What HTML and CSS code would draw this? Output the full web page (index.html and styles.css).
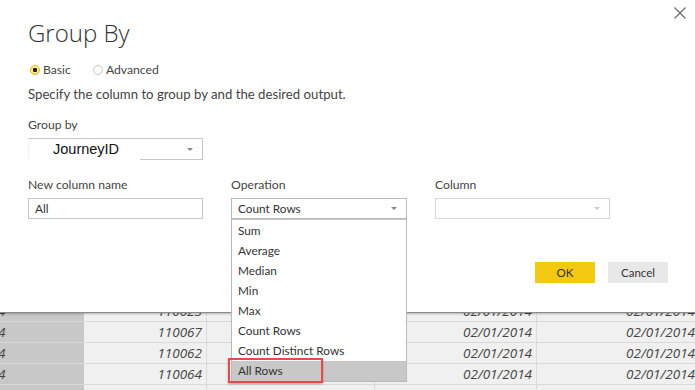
FILE: index.html
```html
<!DOCTYPE html>
<html lang="en">
<head>
  <meta charset="UTF-8" />
  <title>Group By</title>
  <link rel="stylesheet" href="styles.css">
</head>
<body>
  <div class="grid">
    <div class="row"><div class="c1">4</div><div class="c2">110023</div><div class="c3"></div><div class="c4">02/01/2014</div><div class="c5">02/01/2014</div></div>
    <div class="row"><div class="c1">4</div><div class="c2">110067</div><div class="c3"></div><div class="c4">02/01/2014</div><div class="c5">02/01/2014</div></div>
    <div class="row"><div class="c1">4</div><div class="c2">110062</div><div class="c3"></div><div class="c4">02/01/2014</div><div class="c5">02/01/2014</div></div>
    <div class="row"><div class="c1">4</div><div class="c2">110064</div><div class="c3"></div><div class="c4">02/01/2014</div><div class="c5">02/01/2014</div></div>
    <div class="row"><div class="c1"></div><div class="c2"></div><div class="c3"></div><div class="c4"></div><div class="c5"></div></div>
  </div>

  <div class="dialog">
    <button class="close-btn" aria-label="Close">
      <svg width="12" height="12" viewBox="0 0 12 12"><path d="M0.5 0.5 L11.5 11.5 M11.5 0.5 L0.5 11.5" stroke="#666" stroke-width="1.1" fill="none"/></svg>
    </button>
    <h1>Group By</h1>
    <div class="radios">
      <label class="radio"><span class="dot on"></span>Basic</label>
      <label class="radio"><span class="dot"></span>Advanced</label>
    </div>
    <p class="hint">Specify the column to group by and the desired output.</p>

    <div class="label">Group by</div>
    <div class="select groupby">
      <span class="value">JourneyID</span>
      <span class="arrow"></span>
    </div>

    <div class="fields">
      <div class="field">
        <div class="label">New column name</div>
        <div class="input">All</div>
      </div>
      <div class="field">
        <div class="label">Operation</div>
        <div class="select op">
          <span>Count Rows</span>
          <span class="arrow"></span>
          <ul class="menu">
            <li>Sum</li>
            <li>Average</li>
            <li>Median</li>
            <li>Min</li>
            <li>Max</li>
            <li>Count Rows</li>
            <li>Count Distinct Rows</li>
            <li class="selected">All Rows</li>
          </ul>
        </div>
      </div>
      <div class="field">
        <div class="label">Column</div>
        <div class="select disabled"><span></span><span class="arrow"></span></div>
      </div>
    </div>

    <div class="actions">
      <button class="btn ok">OK</button>
      <button class="btn cancel">Cancel</button>
    </div>
  </div>
</body>
</html>
```

FILE: styles.css
```css
body {
  margin: 0;
  width: 695px;
  height: 390px;
  overflow: hidden;
  position: relative;
  font-family: Lato, 'Open Sans', sans-serif;
  color: #333;
  background: #f0f0f0;
}

/* data grid behind the dialog */
.grid {
  padding-top: 301px;
}
.row {
  display: flex;
  height: 21px;
  box-sizing: border-box;
  border-bottom: 1px solid #d9d9d9;
  font-family: 'Open Sans', sans-serif;
  font-size: 13.5px;
  font-style: italic;
  line-height: 20px;
  color: #444;
  white-space: nowrap;
}
.row > div {
  box-sizing: border-box;
  overflow: hidden;
}
.c1 {
  width: 84px;
  background: #c8c8c8;
  text-indent: -2px;
}
.c2 {
  width: 123px;
  text-align: right;
  padding-right: 4px;
  border-right: 1px solid #d9d9d9;
}
.c3 {
  width: 168px;
  border-right: 1px solid #d9d9d9;
}
.c4 {
  width: 162px;
  text-align: right;
  padding-right: 4px;
  border-right: 1px solid #d9d9d9;
}
.c5 {
  width: 158px;
  text-align: right;
  flex: none;
}

/* modal */
.dialog {
  position: absolute;
  top: 0;
  left: 0;
  width: 695px;
  height: 312px;
  box-sizing: border-box;
  background: #fff;
  padding: 13px 27px 0 28px;
  box-shadow: 0 1px 0 #8a8a8a, 0 2px 2px rgba(0, 0, 0, 0.25);
}
.close-btn {
  position: absolute;
  top: 7px;
  right: 9px;
  background: none;
  border: none;
  padding: 0;
  line-height: 0;
}
h1 {
  margin: 0;
  font-family: 'Open Sans', sans-serif;
  font-size: 24px;
  font-weight: 300;
  line-height: 40px;
  color: #333;
}
.radios {
  display: flex;
  gap: 20px;
  margin-top: 8px;
  font-size: 12.2px;
  line-height: 18px;
  color: #444;
}
.radio {
  display: flex;
  align-items: center;
  gap: 3px;
}
.dot {
  width: 8px;
  height: 8px;
  border-radius: 50%;
  border: 1px solid #c8c8c8;
  box-sizing: content-box;
  margin-left: 2px;
}
.dot.on {
  border-color: #e7b600;
  background: radial-gradient(circle, #222 0 2px, #fde8a0 2.5px);
}
.hint {
  margin: 5px 0 0;
  font-size: 13.2px;
  line-height: 20px;
  color: #444;
}
.label {
  font-size: 12.2px;
  line-height: 18px;
  color: #444;
}
.hint + .label {
  margin-top: 12px;
}
.select,
.input {
  position: relative;
  height: 21px;
  box-sizing: border-box;
  border: 1px solid #c6c6c6;
  font-size: 11.8px;
  line-height: 19px;
  padding-left: 6px;
  color: #333;
  display: flex;
  align-items: center;
  justify-content: space-between;
}
.groupby {
  width: 175px;
  margin-top: 4px;
  border-left-color: #f0f0f0;
  border-bottom: none;
  font-family: 'Liberation Sans', Arial, sans-serif;
  font-size: 14.5px;
  color: #111;
  padding-left: 24px;
}
.groupby::after {
  content: "";
  position: absolute;
  left: 111px;
  right: -1px;
  bottom: -1px;
  border-bottom: 1px solid #c6c6c6;
}
.arrow {
  width: 0;
  height: 0;
  border-left: 3px solid transparent;
  border-right: 3px solid transparent;
  border-top: 3px solid #888;
  margin-right: 9px;
}
.disabled {
  border-color: #d6d6d6;
}
.disabled .arrow {
  border-top-color: #c8c8c8;
}

.fields {
  display: grid;
  grid-template-columns: 175px 176px 175px;
  column-gap: 28px;
  margin-top: 17px;
}
.field .label {
  margin-bottom: 4px;
}
.op {
  border-color: #b9b9b9;
}
.menu {
  position: absolute;
  top: 20px;
  left: -1px;
  width: 176px;
  margin: 0;
  padding: 0;
  list-style: none;
  background: #fff;
  border: 1px solid #b9b9b9;
  border-top-color: #c6c6c6;
  box-sizing: border-box;
  z-index: 2;
}
.menu li {
  height: 20px;
  line-height: 20px;
  padding-left: 6px;
  font-size: 11.8px;
  color: #333;
}
.menu li:first-child {
  margin-top: 1px;
}
.menu .selected {
  background: #c8c8c8;
  position: relative;
}
.menu .selected::after {
  content: "";
  position: absolute;
  left: -4px;
  top: -3px;
  width: 91px;
  height: 21px;
  border: 2px solid #e84a4a;
  box-shadow: 0 1px 2px rgba(0, 0, 0, 0.3);
}

.actions {
  display: flex;
  justify-content: flex-end;
  gap: 13px;
  margin-top: 43px;
}
.btn {
  width: 60px;
  height: 21px;
  border: none;
  padding: 0;
  font-family: inherit;
  font-size: 11.5px;
  color: #333;
}
.ok {
  background: #f2c811;
}
.cancel {
  background: #e8e8e8;
}
```
